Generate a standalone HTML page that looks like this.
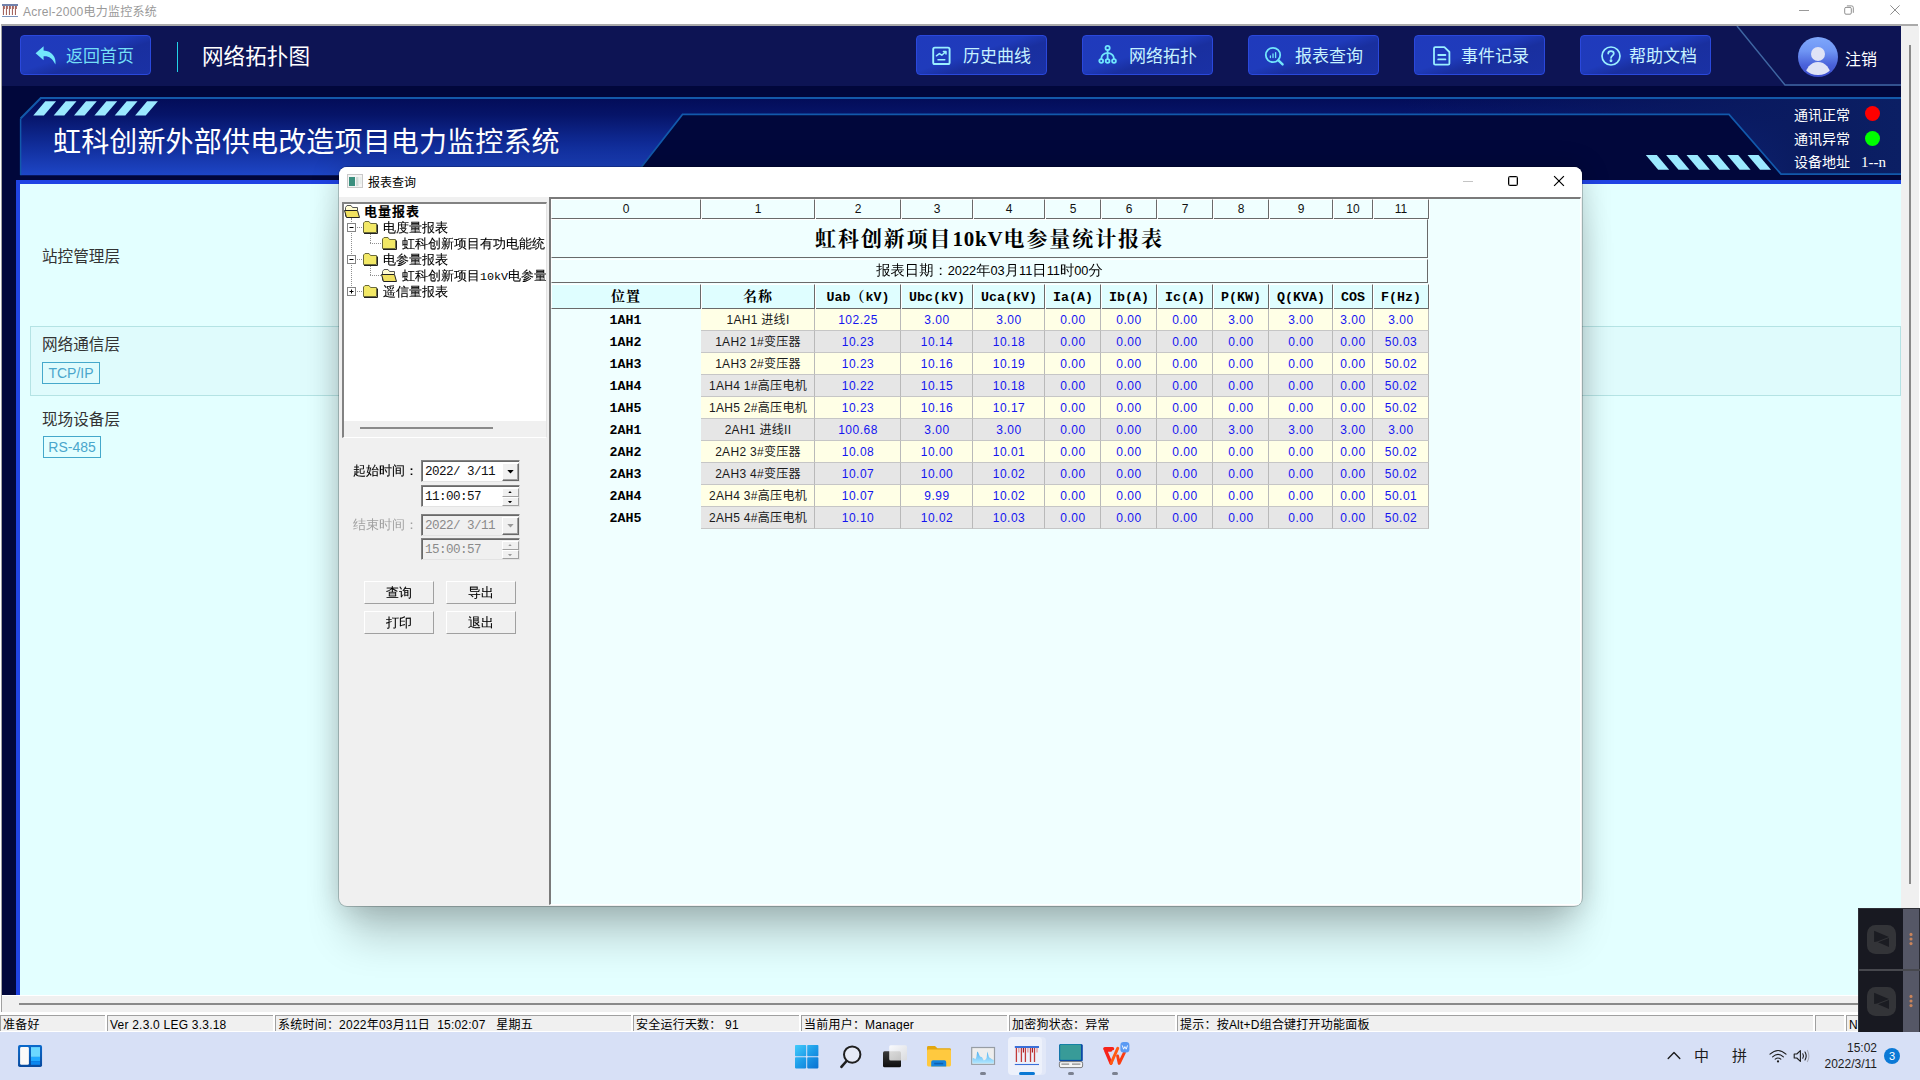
<!DOCTYPE html>
<html lang="zh-CN">
<head>
<meta charset="utf-8">
<title>Acrel-2000电力监控系统</title>
<style>
*{box-sizing:border-box;margin:0;padding:0}
html,body{width:1920px;height:1080px;overflow:hidden;background:#fff}
body{position:relative;font-family:"Liberation Sans","Noto Sans CJK SC",sans-serif;font-size:12px;color:#000}
#root div,#root svg{position:absolute;white-space:nowrap}
.sans{font-family:"Liberation Sans","Noto Sans CJK SC",sans-serif}
.song{font-family:"Liberation Serif","Noto Serif CJK SC",serif}
.zen{font-family:"Liberation Sans","WenQuanYi Zen Hei","Noto Sans CJK SC",sans-serif}

/* ---------- window title bar ---------- */
#titlebar{left:0;top:0;width:1920px;height:24px;background:#fff}
#titlebar .ttl{left:23px;top:3px;font-size:12px;line-height:18px;color:#999;letter-spacing:.25px}
#titleline{left:1px;top:24px;width:1917px;height:2px;background:#aaa}
#leftedge{left:1px;top:26px;width:1px;height:986px;background:#a0a0a0}

/* ---------- app frame ---------- */
#app{left:2px;top:26px;width:1899px;height:969px;background:#01073b;overflow:hidden}
#nav{left:0;top:0;width:1899px;height:60px;background:#0d1454}
.nbtn{top:9px;width:131px;height:40px;border:1px solid #2a48dc;border-radius:4px;
  background:linear-gradient(162deg,#1f3abc 0%,#1f3bbb 44%,#192f9f 60%,#1a31a5 100%)}
  .nbtn .tx{left:46px;top:10px;font-size:17px;line-height:22px;color:#c6f2ff}
.nbtn svg{left:14px;top:10px}
#vsep{left:175px;top:16px;width:1px;height:30px;background:#22d3e6}
#pgname{left:200px;top:16px;font-size:21.6px;line-height:30px;color:#fff}

/* ---------- content panel ---------- */
#panel{left:14px;top:154px;width:1885px;height:815px;background:#e3ffff;border-left:4px solid #2043e3;border-top:4px solid #2043e3}
.lay{font-size:15.6px;line-height:20px;color:#333}
.tag{height:22px;border:1px solid #45a8cb;color:#4aa6cc;font-size:14px;line-height:20px;text-align:center}
#band{left:10px;top:142px;width:1871px;height:70px;background:#dffbfc;border:1px solid #b4e3e4}

/* ---------- scrollbars / status / taskbar ---------- */
#vscroll{left:1901px;top:26px;width:19px;height:970px;background:#f0f0f0}
#hscroll{left:2px;top:995px;width:1918px;height:17px;background:#f0f0f0;border-top:1px solid #fff}
#status{left:0;top:1012px;width:1920px;height:20px;background:#fff}
.pane{top:3px;height:16px;background:#f0f0f0;border-top:1px solid #a0a0a0;border-left:1px solid #a0a0a0;font-size:12px;line-height:18px;padding-left:2px;overflow:hidden;letter-spacing:.22px;color:#000}
#taskbar{left:0;top:1032px;width:1920px;height:48px;background:#d7e0f6}

/* ---------- dialog ---------- */
#dlg{left:339px;top:167px;width:1243px;height:739px;background:#f0f0f0;border-radius:8px;
  box-shadow:0 0 0 1px rgba(0,0,0,.2),0 40px 40px -10px rgba(0,0,0,.2),0 2px 30px 0 rgba(0,0,0,.2);overflow:hidden}
#dlgtitle{left:0;top:0;width:1243px;height:30px;background:#fff}

/* dialog internals */
#dlgtitle .dt{left:29px;top:6px;font-size:12px;line-height:18px;color:#111}
#tree{left:3px;top:35px;width:205px;height:236px;background:#fff;border-left:2px solid #828282;border-top:2px solid #828282;border-right:1px solid #e3e3e3;border-bottom:1px solid #fff;overflow:hidden}
#tree .ti{font-family:"Liberation Mono","WenQuanYi Zen Hei","Noto Sans CJK SC",monospace;font-size:13px;line-height:16px;color:#000;height:16px;-webkit-text-stroke:.12px #000}
#tree .lt{font-size:11.7px;-webkit-text-stroke:0}
.simsun{font-family:"Liberation Mono","WenQuanYi Zen Hei","Noto Sans CJK SC",monospace}
.lbl{font-family:"Liberation Mono","WenQuanYi Zen Hei","Noto Sans CJK SC",monospace;font-size:13px;line-height:16px}
.pick{width:99px;height:22px;background:#fff;border:1px solid;border-color:#828282 #e3e3e3 #e3e3e3 #828282;box-shadow:inset 1px 1px 0 #696969;font-family:"Liberation Mono",monospace;font-size:12.6px;letter-spacing:-.56px;line-height:21px;color:#111}
.pick.dis{background:#f0f0f0;color:#8a8a8a}
.pick .v{left:3px;top:0;height:20px;line-height:22px}
.pick .dd{left:80px;top:2px;width:17px;height:18px;background:#f0f0f0;border:1px solid;border-color:#fff #696969 #696969 #fff;box-shadow:inset -1px -1px 0 #a0a0a0}
.pick .sp{left:80px;width:17px;height:9px;background:#f0f0f0;border:1px solid;border-color:#fff #a0a0a0 #a0a0a0 #fff}
.cbtn{width:70px;height:23px;background:#f0f0f0;border:1px solid;border-color:#fff #a0a0a0 #a0a0a0 #fff;-webkit-text-stroke:.12px #000;text-align:center;font-family:"Liberation Mono","WenQuanYi Zen Hei","Noto Sans CJK SC",monospace;font-size:13px;line-height:23px;color:#000}
#grid{left:210px;top:30px;width:1032px;height:708px;background:#f0ffff;border-left:2px solid #7a7a7a;border-top:2px solid #7a7a7a;border-right:1px solid #fff;border-bottom:1px solid #fff;overflow:hidden}
#grid .hc{top:0;height:20px;background:#f0ffff;border-top:1px solid #fff;border-right:1px solid #6a6a6a;border-bottom:1px solid #6a6a6a;box-shadow:1px 0 0 #fff;text-align:center;font-size:12px;line-height:19px;color:#111}
#grid .mrow{left:0;width:877px;background:#f0ffff;border-top:1px solid #fff;border-left:1px solid #fff;border-right:1px solid #6a6a6a;border-bottom:1px solid #6a6a6a;text-align:center}
#grid .th{top:85px;height:25px;background:#dffeff;border-top:1px solid #fff;border-right:1px solid #6a6a6a;border-bottom:1px solid #6a6a6a;box-shadow:1px 0 0 #fff;text-align:center;font-family:"Liberation Mono","Noto Serif CJK SC",serif;font-weight:bold;font-size:13.3px;line-height:25px;color:#000}
#grid .th .cj{font-size:14px;letter-spacing:1px}
#grid .rh{left:0;width:149px;height:22px;text-align:center;font-family:"Liberation Mono","Noto Serif CJK SC",serif;font-weight:bold;font-size:13.3px;line-height:24px;color:#000}
#grid .c{height:22px;border-right:1px solid #b9b9b9;border-bottom:1px solid #c6c6c6;text-align:center;font-size:12px;line-height:23px;color:#1414f0;letter-spacing:.5px;padding-left:1px}
#grid .c.n{color:#1a1a1a;letter-spacing:.3px}
#grid .dg{font-size:12.8px}
#grid .y{background:#ffffe6}
#grid .g{background:#e6e6e6}
</style>
</head>
<body>
<div id="root">

<!-- window title bar -->
<div id="titlebar">
  <svg width="18" height="16" viewBox="0 0 18 16" style="left:2px;top:3px"><rect x="0" y="1" width="16" height="2" fill="#7283ad"/><rect x="0" y="13" width="16" height="1" fill="#7a93bd"/><g fill="#a4655f"><rect x="0.9" y="3" width="1.1" height="9"/><rect x="3.9" y="3" width="1.1" height="9"/><rect x="6.9" y="3" width="1.1" height="9"/><rect x="9.9" y="3" width="1.1" height="9"/><rect x="12.9" y="3" width="1.1" height="9"/></g><g fill="#b07770"><rect x="2" y="3" width="1" height="3"/><rect x="5" y="3" width="1" height="3"/><rect x="8" y="3" width="1" height="3"/><rect x="11" y="3" width="1" height="3"/><rect x="14" y="3" width="1" height="3"/></g></svg>
  <div class="ttl sans">Acrel-2000电力监控系统</div>
  <div style="left:1799px;top:10px;width:10px;height:1px;background:#9a9a9a"></div>
  <svg width="12" height="12" viewBox="0 0 12 12" style="left:1843px;top:4px" fill="none" stroke="#8f8f8f" stroke-width="1"><rect x="1.7" y="3.4" width="6.6" height="6.8" rx="1.3"/><path d="M3.9 1.9 L8.6 1.9 Q10.3 1.9 10.3 3.6 L10.3 8.8"/></svg>
  <svg width="12" height="12" viewBox="0 0 12 12" style="left:1889px;top:4px"><path d="M1.4 1.4 L10.6 10.6 M10.6 1.4 L1.4 10.6" stroke="#8f8f8f" stroke-width="1" fill="none"/></svg>
</div>
<div id="titleline"></div>
<div id="leftedge"></div>

<!-- application frame -->
<div id="app">
  <div id="nav"></div>
  
  <div class="nbtn" style="left:18px">
    <svg width="24" height="22" viewBox="0 0 24 22" style="left:13px;top:9px"><path d="M9.6 1.2 L1.6 8.2 L9.6 15.2 L9.6 11.2 C14.6 10.8 18.4 12.8 21.4 19.6 C22.6 12.2 17.8 5.8 9.6 5.4 Z" fill="#72e6fb"/></svg>
    <div class="tx" style="left:45px;color:#74dff6">返回首页</div>
  </div>
  <div id="vsep"></div>
  <div id="pgname">网络拓扑图</div>

  <div class="nbtn" style="left:914px">
    <svg width="22" height="22" viewBox="0 0 22 22" style="left:14px;top:9px" fill="none" stroke="#9aefff" stroke-width="1.9" stroke-linecap="round" stroke-linejoin="round"><rect x="2.2" y="2.6" width="16.4" height="16.4" rx="1.6"/><path d="M5.4 10.8 L8.4 8.6 L10.8 10.2 L14.6 6.8 M12.4 6.4 L15 6.4 L15 9 M7 14.8 L13.8 14.8" stroke-width="1.5"/></svg>
    <div class="tx">历史曲线</div>
  </div>
  <div class="nbtn" style="left:1080px">
    <svg width="22" height="22" viewBox="0 0 22 22" style="left:14px;top:8px" fill="none" stroke="#6fe6fd" stroke-width="1.8" stroke-linecap="round"><circle cx="10.6" cy="3.9" r="2.1"/><circle cx="4.2" cy="17" r="1.9"/><circle cx="10.6" cy="17" r="1.9"/><circle cx="17" cy="17" r="1.9"/><path d="M10.6 6 L10.6 15 M4.2 15 C4.2 11 7.2 9.2 10.6 8.8 C14 9.2 17 11 17 15"/></svg>
    <div class="tx">网络拓扑</div>
  </div>
  <div class="nbtn" style="left:1246px">
    <svg width="22" height="22" viewBox="0 0 22 22" style="left:15px;top:10px" fill="none" stroke="#72e6fb" stroke-linecap="round"><circle cx="9" cy="9" r="7.2" stroke-width="1.8"/><path d="M14.4 14.4 L18.6 18.4" stroke-width="2.4"/><path d="M6.4 11.6 L6.4 10 M9 11.6 L9 8 M11.6 11.6 L11.6 6.6" stroke-width="1.3"/></svg>
    <div class="tx">报表查询</div>
  </div>
  <div class="nbtn" style="left:1412px">
    <svg width="22" height="22" viewBox="0 0 22 22" style="left:15px;top:9px" fill="none" stroke="#9aefff" stroke-width="1.8" stroke-linecap="round" stroke-linejoin="round"><path d="M5.2 2.2 L14.4 2.2 L19.4 7 L19.4 18.4 Q19.4 19.6 18.2 19.6 L5.2 19.6 Q4 19.6 4 18.4 L4 3.4 Q4 2.2 5.2 2.2 Z"/><path d="M8.2 10 L15.4 10 M8.2 14.4 L15.4 14.4"/></svg>
    <div class="tx">事件记录</div>
  </div>
  <div class="nbtn" style="left:1578px">
    <svg width="22" height="22" viewBox="0 0 22 22" style="left:19px;top:9px" fill="none" stroke="#9aefff" stroke-width="1.7" stroke-linecap="round"><circle cx="11" cy="11" r="9"/><path d="M8.2 8.6 C8.2 5.4 13.8 5.4 13.8 8.6 C13.8 10.6 11 10.8 11 13"/><circle cx="11" cy="15.8" r="0.6" fill="#9aefff"/></svg>
    <div class="tx" style="left:48px">帮助文档</div>
  </div>

  <!-- user corner -->
  <svg width="170" height="64" viewBox="0 0 170 64" style="left:1731px;top:0" fill="none" stroke="#3f66a2" stroke-width="1.5"><path d="M4 0 L52 59 L170 59"/></svg>
  <div id="avatar" style="left:1796px;top:11px;width:40px;height:40px;border-radius:50%;background:linear-gradient(180deg,#7ea7fb 0%,#6f95f4 35%,#4a62da 70%,#3b4dcd 100%);overflow:hidden">
    <div style="left:13px;top:10px;width:14px;height:14px;border-radius:50%;background:#dfe3f6"></div>
    <div style="left:2.3px;top:2.3px;width:35.4px;height:35.4px;border-radius:50%;overflow:hidden"><div style="left:4.4px;top:23px;width:26.6px;height:30px;border-radius:50%;background:#dfe3f6"></div></div>
  </div>
  <div style="left:1843px;top:23px;font-size:16px;line-height:22px;color:#fff">注销</div>

  
  <svg id="banner" width="1899" height="84" viewBox="0 0 1899 84" style="left:0;top:70px">
    <defs>
      <linearGradient id="bg1" x1="0" y1="0" x2="0" y2="1">
        <stop offset="0" stop-color="#030c58"/><stop offset="0.22" stop-color="#061468"/>
        <stop offset="0.6" stop-color="#102c98"/><stop offset="1" stop-color="#1e46c6"/>
      </linearGradient>
      <linearGradient id="bg2" x1="0" y1="0" x2="1" y2="0">
        <stop offset="0" stop-color="#0a1b60" stop-opacity="0"/><stop offset="0.8" stop-color="#0a1b60" stop-opacity="1"/>
        <stop offset="1" stop-color="#0b1f64"/>
      </linearGradient>
    </defs>
    <path d="M18.6 22.5 L38.8 1.8 L1899 1.8 L1899 78.6 L1779 78.6 L1727 18.4 L680.5 18.4 L633 79.2 L18.6 79.2 Z" fill="url(#bg1)"/>
    <path d="M1400 1.8 L1899 1.8 L1899 78.6 L1779 78.6 L1727 18.4 L1400 18.4 Z" fill="url(#bg2)"/>
    <path d="M18.6 79.2 L18.6 22.5" fill="none" stroke="#1259ab" stroke-width="1.5"/><path d="M18.6 22.5 L38.8 2 L1899 2" fill="none" stroke="#1359a9" stroke-width="2.1"/>
    <path d="M633 79.2 L680.5 18.4 L1727 18.4 L1779 78.1 L1899 78.1" fill="none" stroke="#1259ab" stroke-width="1.7"/>
    <g fill="#9be9ff"><polygon points="31.3,19.5 41.9,19.5 54.1,5.2 43.3,5.2"/><polygon points="51.7,19.5 62.3,19.5 74.5,5.2 63.7,5.2"/><polygon points="72.0,19.5 82.6,19.5 94.8,5.2 84.0,5.2"/><polygon points="92.4,19.5 103.0,19.5 115.2,5.2 104.4,5.2"/><polygon points="112.7,19.5 123.3,19.5 135.5,5.2 124.7,5.2"/><polygon points="133.1,19.5 143.7,19.5 155.9,5.2 145.1,5.2"/><polygon points="1643.8,59 1654.8,59 1667.2,73.7 1656.2,73.7"/><polygon points="1664.1,59 1675.1,59 1687.5,73.7 1676.5,73.7"/><polygon points="1684.5,59 1695.5,59 1707.9,73.7 1696.9,73.7"/><polygon points="1704.8,59 1715.8,59 1728.2,73.7 1717.2,73.7"/><polygon points="1725.2,59 1736.2,59 1748.6,73.7 1737.6,73.7"/><polygon points="1745.5,59 1756.5,59 1769.0,73.7 1758.0,73.7"/></g>
  </svg>
  <div id="sysname" style="left:51px;top:97px;letter-spacing:.15px;font-size:28px;line-height:40px;color:#fff">虹科创新外部供电改造项目电力监控系统</div>
  <div class="st" style="left:1792px;top:79px;font-size:14px;line-height:20px;color:#fff">通讯正常</div>
  <div class="st" style="left:1792px;top:103px;font-size:14px;line-height:20px;color:#fff">通讯异常</div>
  <div class="st" style="left:1792px;top:126px;font-size:14px;line-height:20px;color:#fff">设备地址</div>
  <div class="st song" style="left:1859px;top:126px;font-size:15px;line-height:20px;color:#fff">1--n</div>
  <div style="left:1863px;top:80px;width:15px;height:15px;border-radius:50%;background:#ff0000"></div>
  <div style="left:1863px;top:105px;width:15px;height:15px;border-radius:50%;background:#00ff00"></div>

  <div id="panel">
    
    <div id="band"></div>
    <div class="lay" style="left:22px;top:63px">站控管理层</div>
    <div class="lay" style="left:22px;top:151px">网络通信层</div>
    <div class="tag" style="left:22px;top:178px;width:58px">TCP/IP</div>
    <div class="lay" style="left:22px;top:226px">现场设备层</div>
    <div class="tag" style="left:23px;top:252px;width:58px">RS-485</div>

  </div>
</div>

<div id="vscroll"><div style="left:18px;top:0;width:1px;height:970px;background:#fff"></div><div style="left:8px;top:19px;width:2px;height:839px;background:#8a8a8a"></div></div>
<div id="hscroll"><div style="left:17px;top:7px;width:1840px;height:2px;background:#8a8a8a"></div></div>
<div id="status">
  <div class="pane" style="left:0px;width:105px">准备好</div><div class="pane" style="left:107px;width:166px">Ver 2.3.0 LEG 3.3.18</div><div class="pane" style="left:275px;width:356px">系统时间：2022年03月11日&nbsp; 15:02:07&nbsp;&nbsp; 星期五</div><div class="pane" style="left:633px;width:166px">安全运行天数：&nbsp;91</div><div class="pane" style="left:801px;width:206px">当前用户：Manager</div><div class="pane" style="left:1009px;width:166px">加密狗状态：异常</div><div class="pane" style="left:1177px;width:636px">提示：按Alt+D组合键打开功能面板</div><div class="pane" style="left:1815px;width:29px"></div><div class="pane" style="left:1846px;width:74px">N</div>
</div>
<div id="taskbar">
  
  <!-- widgets -->
  <svg width="26" height="24" viewBox="0 0 26 24" style="left:17px;top:12px"><defs><linearGradient id="wd" x1="0" y1="0" x2="0" y2="1"><stop offset="0" stop-color="#0b6acb"/><stop offset="1" stop-color="#084a9e"/></linearGradient></defs><rect x="1.05" y="1" width="24" height="22" rx="1.8" fill="url(#wd)"/><rect x="3.1" y="3.1" width="8.8" height="17.7" rx="1.3" fill="#fbfaf8"/><rect x="14" y="3.1" width="9" height="9.8" fill="#6bd8ff"/><rect x="14" y="12.9" width="9" height="4.3" fill="#1fa9ff"/><rect x="14" y="17.2" width="9" height="3.6" fill="#0a86ee"/></svg>
  <!-- start -->
  <svg width="24" height="24" viewBox="0 0 24 24" style="left:795px;top:13px"><defs><linearGradient id="wg" gradientUnits="userSpaceOnUse" x1="0" y1="0" x2="24" y2="24"><stop offset="0" stop-color="#42cbfc"/><stop offset="0.5" stop-color="#1c9be8"/><stop offset="1" stop-color="#0a6fd0"/></linearGradient></defs><g fill="url(#wg)"><rect x="0" y="0" width="11.2" height="11.2" rx="0.8"/><rect x="12.2" y="0" width="11.2" height="11.2" rx="0.8"/><rect x="0" y="12.2" width="11.2" height="11.2" rx="0.8"/><rect x="12.2" y="12.2" width="11.2" height="11.2" rx="0.8"/></g></svg>
  <!-- search -->
  <svg width="24" height="24" viewBox="0 0 24 24" style="left:839px;top:13px" fill="none" stroke="#1f1f1f" stroke-linecap="round"><circle cx="13.2" cy="9.6" r="8.2" stroke-width="2" fill="#e6eaf6"/><path d="M7.6 16 L2.4 21.8" stroke-width="2.6"/></svg>
  <!-- task view -->
  <svg width="26" height="24" viewBox="0 0 26 24" style="left:882px;top:13px"><defs><linearGradient id="tv1" x1="0" y1="0" x2="0" y2="1"><stop offset="0" stop-color="#3a3a3a"/><stop offset="1" stop-color="#0e0e0e"/></linearGradient><linearGradient id="tv2" x1="0" y1="0" x2="1" y2="1"><stop offset="0" stop-color="#ffffff"/><stop offset="1" stop-color="#dadada"/></linearGradient></defs><rect x="1" y="6.2" width="18" height="16" rx="1.5" fill="url(#tv1)"/><rect x="7.2" y="0.2" width="17.8" height="15.4" rx="1.5" fill="url(#tv2)" fill-opacity="0.85"/></svg>
  <!-- explorer -->
  <svg width="26" height="24" viewBox="0 0 26 24" style="left:926px;top:13px"><path d="M1 2.4 Q1 1 2.4 1 L9 1 L11.4 3.2 L23.6 3.2 Q25 3.2 25 4.6 L25 6 L1 6 Z" fill="#e3a70f"/><rect x="1" y="4.4" width="24" height="17" rx="1.4" fill="#ffc93f"/><path d="M5.2 21.4 L5.2 17 Q5.2 15.2 7 15.2 L18.4 15.2 Q20.2 15.2 20.2 17 L20.2 21.4 Z" fill="#1584dd"/><rect x="8.2" y="17.8" width="9" height="1.6" fill="#0c5fb0"/></svg>
  <!-- perf monitor -->
  <svg width="26" height="20" viewBox="0 0 26 20" style="left:970px;top:14px"><defs><linearGradient id="pm" x1="0" y1="0" x2="0" y2="1"><stop offset="0" stop-color="#4cb0f2"/><stop offset="1" stop-color="#b4e8ff"/></linearGradient></defs><rect x="1.7" y="1.5" width="22.8" height="16.8" fill="#eeeeee" stroke="#979da4" stroke-width="1.2"/><path d="M2.4 12.6 L3.6 12 L5.4 13.2 L6.4 11 L7.2 5.4 L8.2 6.4 L9 8.6 L10 10.4 L12 11.2 L13 13 L13.8 14.6 L15.4 13.8 L16.6 12 L17.4 5.6 L18.2 8.4 L19 11.2 L20.6 12.2 L22.4 13.6 L23.8 14 L23.8 17.6 L2.4 17.6 Z" fill="url(#pm)"/></svg>
  <div style="left:980px;top:40px;width:6px;height:3px;border-radius:2px;background:#7b8190"></div>
  <!-- active app -->
  <div style="left:1011px;top:5px;width:35px;height:38px;border-radius:4px;background:#e2e8f8"></div>
  <div style="left:1008px;top:5px;width:34px;height:38px;border-radius:4px;background:#edf1fb"></div>
  <svg width="28" height="22" viewBox="0 0 28 22" style="left:1013px;top:13px"><path d="M1.8 2 L26 2" stroke="#3a6fd8" stroke-width="2"/><path d="M1.8 19.5 L26 19.5" stroke="#3a6fd8" stroke-width="1.1"/><g stroke="#c23a3a" stroke-width="1.3"><path d="M3.4 3 V17"/><path d="M8.4 3 V17"/><path d="M12.4 3 V17"/><path d="M17.5 3 V17"/><path d="M21.5 3 V17"/></g><g stroke="#a80f12" stroke-width="1.1"><path d="M10.4 3 V7.6"/><path d="M19.4 3 V7.6"/></g><g stroke="#e5a4a6" stroke-width="1.5"><path d="M5.8 3 V7.6"/><path d="M14.9 3 V7.6"/><path d="M24 3 V7.6"/></g></svg>
  <div style="left:1019px;top:40px;width:16px;height:3px;border-radius:2px;background:#0b78d4"></div>
  <!-- monitor -->
  <svg width="26" height="26" viewBox="0 0 26 26" style="left:1058px;top:11px"><rect x="1.2" y="1" width="23.6" height="17.6" rx="1.6" fill="#0b4aa6"/><path d="M1.2 2.6 Q1.2 1 2.8 1 L23 1 L23 17 L1.2 17 Z" fill="#0a7aa8"/><rect x="2.2" y="1.8" width="20.8" height="15" rx="0.8" fill="#389b98"/><rect x="1.4" y="18.6" width="23.2" height="6" rx="1.6" fill="#f4f4f4" stroke="#707070" stroke-width="0.9"/><path d="M3.4 21.2 L11.2 21.2 M14 21.2 L22.4 21.2" stroke="#8a8a8a" stroke-width="1.2"/></svg>
  <div style="left:1068px;top:40px;width:6px;height:3px;border-radius:2px;background:#7b8190"></div>
  <!-- wps -->
  <svg width="30" height="28" viewBox="0 0 30 28" style="left:1102px;top:9px" fill="none" stroke-linecap="round" stroke-linejoin="round"><path d="M2.8 7.7 L10.6 7.7 M2.8 7.7 L9 22.2 M4.6 9 L8.8 9" stroke="#f6231a" stroke-width="3.3"/><path d="M9 22.4 L15.8 7.2" stroke="#ff5a12" stroke-width="2.9"/><path d="M15.6 15 L17.2 22.4 L22.4 11.6" stroke="#fa3d12" stroke-width="2.9"/><rect x="18.4" y="1" width="9" height="10.4" rx="3.2" fill="#5a9af4" stroke="none"/><path d="M20.4 4.8 L21.6 8.2 L22.9 5.6 L24.2 8.2 L25.4 4.8" stroke="#fff" stroke-width="0.9"/></svg>
  <div style="left:1112px;top:40px;width:6px;height:3px;border-radius:2px;background:#7b8190"></div>
  <!-- tray -->
  <svg width="14" height="9" viewBox="0 0 14 9" style="left:1667px;top:19px"><path d="M1.2 7.4 L7 1.6 L12.8 7.4" stroke="#1c1c1c" stroke-width="1.4" fill="none" stroke-linecap="round" stroke-linejoin="round"/></svg>
  <div style="left:1694px;top:14px;font-size:15px;line-height:20px;color:#1c1c1c">中</div>
  <div style="left:1732px;top:14px;font-size:15px;line-height:20px;color:#1c1c1c">拼</div>
  <svg width="18" height="14" viewBox="0 0 18 14" style="left:1769px;top:17px" fill="none" stroke="#1c1c1c" stroke-width="1.1" stroke-linecap="round"><path d="M1 5.2 Q9 -2.2 17 5.2"/><path d="M3.6 7.8 Q9 3 14.4 7.8"/><path d="M6.2 10.2 Q9 7.8 11.8 10.2"/><circle cx="9" cy="12.4" r="1.1" fill="#1c1c1c" stroke="none"/></svg>
  <svg width="18" height="14" viewBox="0 0 18 14" style="left:1793px;top:17px" fill="none" stroke="#1c1c1c" stroke-width="1.1" stroke-linecap="round" stroke-linejoin="round"><path d="M1.2 5 L3.8 5 L7.4 1.6 L7.4 12.4 L3.8 9 L1.2 9 Z"/><path d="M9.8 4.8 Q11.2 7 9.8 9.2"/><path d="M12 3 Q14.4 7 12 11"/><path d="M14.4 1.4 Q17.4 7 14.4 12.6" stroke="#a8acb8"/></svg>
  <div style="left:1800px;top:8px;width:77px;text-align:right;font-size:12px;line-height:16px;color:#1c1c1c">15:02</div>
  <div style="left:1800px;top:24px;width:77px;text-align:right;font-size:12px;line-height:16px;color:#1c1c1c">2022/3/11</div>
  <div style="left:1884px;top:16px;width:16px;height:16px;border-radius:50%;background:#0b79d6;color:#fff;font-size:11px;line-height:16px;text-align:center">3</div>

</div>

<!-- report query dialog -->
<div id="dlg">
  <div id="dlgtitle"></div>
  
  <svg width="16" height="14" viewBox="0 0 16 14" style="left:8px;top:7px"><rect x="0.5" y="0.5" width="15" height="13" fill="#f4f4f4" stroke="#c9c9c9"/><rect x="2" y="3" width="6" height="9" fill="#3a8f7e"/><rect x="9" y="3" width="2.5" height="9" fill="#d0dcd8"/><rect x="12.5" y="3" width="2" height="7" fill="#e6ece9"/></svg>
  <div class="dt" style="left:29px;top:7px;font-size:12px;line-height:18px;color:#000">报表查询</div>
  <div style="left:1124px;top:14px;width:10px;height:1px;background:#c4c4c4"></div>
  <div style="left:1169px;top:9px;width:10px;height:10px;border:1px solid #000;border-radius:1.5px;box-shadow:inset 0 0 0 .3px #000"></div>
  <svg width="12" height="12" viewBox="0 0 12 12" style="left:1214px;top:8px"><path d="M1.1 1.1 L10.9 10.9 M10.9 1.1 L1.1 10.9" stroke="#000" stroke-width="1.2" fill="none"/></svg>
  <div id="tree">
      <svg width="17" height="15" viewBox="0 0 17 15" style="left:0px;top:0px"><path d="M1.5 12.5 L1.5 3.5 L3 1.5 L7 1.5 L8.5 3.5 L13.5 3.5 L13.5 6" fill="#fffbd0" stroke="#555" stroke-width="1"/><path d="M0.5 6.5 L13.5 6.5 L15.5 13.5 L2.5 13.5 Z" fill="#f0e060" stroke="#222" stroke-width="1"/></svg>
      <div class="ti" style="left:20px;top:1px;font-weight:bold;font-family:'Liberation Mono','Noto Sans CJK SC',monospace;letter-spacing:1px">电量报表</div>
      <div style="left:7px;top:14px;width:0;height:70px;border-left:1px dotted #909090"></div>
      <div style="left:11px;top:23px;width:7px;height:0;border-top:1px dotted #909090"></div>
      <div style="left:11px;top:55px;width:7px;height:0;border-top:1px dotted #909090"></div>
      <div style="left:11px;top:87px;width:7px;height:0;border-top:1px dotted #909090"></div>
      <div style="left:26px;top:30px;width:0;height:9px;border-left:1px dotted #909090"></div>
      <div style="left:26px;top:39px;width:11px;height:0;border-top:1px dotted #909090"></div>
      <div style="left:26px;top:62px;width:0;height:9px;border-left:1px dotted #909090"></div>
      <div style="left:26px;top:71px;width:11px;height:0;border-top:1px dotted #909090"></div>
      <svg width="9" height="9" viewBox="0 0 9 9" style="left:3px;top:19px"><rect x="0.5" y="0.5" width="8" height="8" fill="#fff" stroke="#848484"/><path d="M2.5 4.5 L6.5 4.5" stroke="#000"/></svg>
      <svg width="17" height="15" viewBox="0 0 17 15" style="left:18px;top:16px"><path d="M1.5 12.5 L1.5 3 L3 1.5 L7 1.5 L8.5 3.5 L14.5 3.5 L14.5 12.5 Z" fill="#f2e866" stroke="#6b6b3a" stroke-width="1"/><path d="M2 13.5 L15.5 13.5 L15.5 4.5" fill="none" stroke="#222" stroke-width="1"/></svg>
      <div class="ti" style="left:39px;top:17px">电度量报表</div>
      <svg width="17" height="15" viewBox="0 0 17 15" style="left:37px;top:32px"><path d="M1.5 12.5 L1.5 3 L3 1.5 L7 1.5 L8.5 3.5 L14.5 3.5 L14.5 12.5 Z" fill="#f2e866" stroke="#6b6b3a" stroke-width="1"/><path d="M2 13.5 L15.5 13.5 L15.5 4.5" fill="none" stroke="#222" stroke-width="1"/></svg>
      <div class="ti" style="left:58px;top:33px">虹科创新项目有功电能统</div>
      <svg width="9" height="9" viewBox="0 0 9 9" style="left:3px;top:51px"><rect x="0.5" y="0.5" width="8" height="8" fill="#fff" stroke="#848484"/><path d="M2.5 4.5 L6.5 4.5" stroke="#000"/></svg>
      <svg width="17" height="15" viewBox="0 0 17 15" style="left:18px;top:48px"><path d="M1.5 12.5 L1.5 3 L3 1.5 L7 1.5 L8.5 3.5 L14.5 3.5 L14.5 12.5 Z" fill="#f2e866" stroke="#6b6b3a" stroke-width="1"/><path d="M2 13.5 L15.5 13.5 L15.5 4.5" fill="none" stroke="#222" stroke-width="1"/></svg>
      <div class="ti" style="left:39px;top:49px">电参量报表</div>
      <svg width="17" height="15" viewBox="0 0 17 15" style="left:37px;top:64px"><path d="M1.5 12.5 L1.5 3.5 L3 1.5 L7 1.5 L8.5 3.5 L13.5 3.5 L13.5 6" fill="#fffbd0" stroke="#555" stroke-width="1"/><path d="M0.5 6.5 L13.5 6.5 L15.5 13.5 L2.5 13.5 Z" fill="#f0e060" stroke="#222" stroke-width="1"/></svg>
      <div class="ti" style="left:58px;top:65px">虹科创新项目<span class="lt">10kV</span>电参量</div>
      <svg width="9" height="9" viewBox="0 0 9 9" style="left:3px;top:83px"><rect x="0.5" y="0.5" width="8" height="8" fill="#fff" stroke="#848484"/><path d="M2.5 4.5 L6.5 4.5" stroke="#000"/><path d="M4.5 2.5 L4.5 6.5" stroke="#000"/></svg>
      <svg width="17" height="15" viewBox="0 0 17 15" style="left:18px;top:80px"><path d="M1.5 12.5 L1.5 3 L3 1.5 L7 1.5 L8.5 3.5 L14.5 3.5 L14.5 12.5 Z" fill="#f2e866" stroke="#6b6b3a" stroke-width="1"/><path d="M2 13.5 L15.5 13.5 L15.5 4.5" fill="none" stroke="#222" stroke-width="1"/></svg>
      <div class="ti" style="left:39px;top:81px">遥信量报表</div>
      <div style="left:0;top:217px;width:204px;height:16px;background:#f0f0f0"></div>
      <div style="left:16px;top:223px;width:133px;height:2px;background:#8a8a8a"></div>
  </div>
  <div style="left:210px;top:30px;width:1px;height:709px;background:#f0f0f0"></div>
  <div class="lbl" style="left:14px;top:297px;-webkit-text-stroke:.12px #000">起始时间：</div>
  <div class="pick" style="left:82px;top:293px"><div class="v">2022/ 3/11</div><div class="dd"><svg width="7" height="4" viewBox="0 0 8 5" style="left:4px;top:6px"><path d="M0 0 L8 0 L4 4.5 Z" fill="#000"/></svg></div></div>
  <div class="pick" style="left:82px;top:318px"><div class="v">11:00:57</div><div class="sp" style="top:2px"><svg width="4" height="2.4" viewBox="0 0 5 3" style="left:5px;top:2px"><path d="M0 3 L5 3 L2.5 0 Z" fill="#000"/></svg></div><div class="sp" style="top:11px"><svg width="4" height="2.4" viewBox="0 0 5 3" style="left:5px;top:3px"><path d="M0 0 L5 0 L2.5 3 Z" fill="#000"/></svg></div></div>
  <div class="lbl" style="left:14px;top:351px;color:#a0a0a0">结束时间：</div>
  <div class="pick dis" style="left:82px;top:347px"><div class="v">2022/ 3/11</div><div class="dd"><svg width="7" height="4" viewBox="0 0 8 5" style="left:4px;top:6px"><path d="M0 0 L8 0 L4 4.5 Z" fill="#9a9a9a"/></svg></div></div>
  <div class="pick dis" style="left:82px;top:371px"><div class="v">15:00:57</div><div class="sp" style="top:2px"><svg width="4" height="2.4" viewBox="0 0 5 3" style="left:5px;top:2px"><path d="M0 3 L5 3 L2.5 0 Z" fill="#9a9a9a"/></svg></div><div class="sp" style="top:11px"><svg width="4" height="2.4" viewBox="0 0 5 3" style="left:5px;top:3px"><path d="M0 0 L5 0 L2.5 3 Z" fill="#9a9a9a"/></svg></div></div>
  <div class="cbtn" style="left:25px;top:414px">查询</div>
  <div class="cbtn" style="left:107px;top:414px">导出</div>
  <div class="cbtn" style="left:25px;top:444px">打印</div>
  <div class="cbtn" style="left:107px;top:444px">退出</div>
  <div id="grid">
    <div class="hc" style="left:0px;width:150px;border-left:1px solid #fff">0</div>
    <div class="hc" style="left:151px;width:113px">1</div>
    <div class="hc" style="left:265px;width:85px">2</div>
    <div class="hc" style="left:351px;width:71px">3</div>
    <div class="hc" style="left:423px;width:71px">4</div>
    <div class="hc" style="left:495px;width:55px">5</div>
    <div class="hc" style="left:551px;width:55px">6</div>
    <div class="hc" style="left:607px;width:55px">7</div>
    <div class="hc" style="left:663px;width:55px">8</div>
    <div class="hc" style="left:719px;width:63px">9</div>
    <div class="hc" style="left:783px;width:39px">10</div>
    <div class="hc" style="left:823px;width:55px">11</div>
    <div class="mrow song" style="top:20px;height:39px;font-weight:bold;font-size:21px;line-height:38px;letter-spacing:1.9px;color:#000">虹科创新项目<span style="letter-spacing:0.8px">10kV</span>电参量统计报表</div>
    <div class="mrow" style="top:60px;height:24px;font-family:'Liberation Sans','WenQuanYi Zen Hei','Noto Sans CJK SC',sans-serif;font-size:14.3px;line-height:21px;color:#000"><span>报表日期：</span><span class="dg">2022</span>年<span class="dg">03</span>月<span class="dg">11</span>日<span class="dg">11</span>时<span class="dg">00</span>分</div>
    <div class="th" style="left:0px;width:150px;border-left:1px solid #fff"><span class="cj">位置</span></div>
    <div class="th" style="left:151px;width:113px"><span class="cj">名称</span></div>
    <div class="th" style="left:265px;width:85px">Uab<span class="cj">（</span>kV)</div>
    <div class="th" style="left:351px;width:71px">Ubc(kV)</div>
    <div class="th" style="left:423px;width:71px">Uca(kV)</div>
    <div class="th" style="left:495px;width:55px">Ia(A)</div>
    <div class="th" style="left:551px;width:55px">Ib(A)</div>
    <div class="th" style="left:607px;width:55px">Ic(A)</div>
    <div class="th" style="left:663px;width:55px">P(KW)</div>
    <div class="th" style="left:719px;width:63px">Q(KVA)</div>
    <div class="th" style="left:783px;width:39px">COS</div>
    <div class="th" style="left:823px;width:55px">F(Hz)</div>
    <div class="rh" style="top:110px">1AH1</div>
    <div class="c n y" style="left:150px;top:110px;width:114px">1AH1 进线I</div>
    <div class="c y" style="left:264px;top:110px;width:86px">102.25</div>
    <div class="c y" style="left:350px;top:110px;width:72px">3.00</div>
    <div class="c y" style="left:422px;top:110px;width:72px">3.00</div>
    <div class="c y" style="left:494px;top:110px;width:56px">0.00</div>
    <div class="c y" style="left:550px;top:110px;width:56px">0.00</div>
    <div class="c y" style="left:606px;top:110px;width:56px">0.00</div>
    <div class="c y" style="left:662px;top:110px;width:56px">3.00</div>
    <div class="c y" style="left:718px;top:110px;width:64px">3.00</div>
    <div class="c y" style="left:782px;top:110px;width:40px">3.00</div>
    <div class="c y" style="left:822px;top:110px;width:56px">3.00</div>
    <div class="rh" style="top:132px">1AH2</div>
    <div class="c n g" style="left:150px;top:132px;width:114px">1AH2 1#变压器</div>
    <div class="c g" style="left:264px;top:132px;width:86px">10.23</div>
    <div class="c g" style="left:350px;top:132px;width:72px">10.14</div>
    <div class="c g" style="left:422px;top:132px;width:72px">10.18</div>
    <div class="c g" style="left:494px;top:132px;width:56px">0.00</div>
    <div class="c g" style="left:550px;top:132px;width:56px">0.00</div>
    <div class="c g" style="left:606px;top:132px;width:56px">0.00</div>
    <div class="c g" style="left:662px;top:132px;width:56px">0.00</div>
    <div class="c g" style="left:718px;top:132px;width:64px">0.00</div>
    <div class="c g" style="left:782px;top:132px;width:40px">0.00</div>
    <div class="c g" style="left:822px;top:132px;width:56px">50.03</div>
    <div class="rh" style="top:154px">1AH3</div>
    <div class="c n y" style="left:150px;top:154px;width:114px">1AH3 2#变压器</div>
    <div class="c y" style="left:264px;top:154px;width:86px">10.23</div>
    <div class="c y" style="left:350px;top:154px;width:72px">10.16</div>
    <div class="c y" style="left:422px;top:154px;width:72px">10.19</div>
    <div class="c y" style="left:494px;top:154px;width:56px">0.00</div>
    <div class="c y" style="left:550px;top:154px;width:56px">0.00</div>
    <div class="c y" style="left:606px;top:154px;width:56px">0.00</div>
    <div class="c y" style="left:662px;top:154px;width:56px">0.00</div>
    <div class="c y" style="left:718px;top:154px;width:64px">0.00</div>
    <div class="c y" style="left:782px;top:154px;width:40px">0.00</div>
    <div class="c y" style="left:822px;top:154px;width:56px">50.02</div>
    <div class="rh" style="top:176px">1AH4</div>
    <div class="c n g" style="left:150px;top:176px;width:114px">1AH4 1#高压电机</div>
    <div class="c g" style="left:264px;top:176px;width:86px">10.22</div>
    <div class="c g" style="left:350px;top:176px;width:72px">10.15</div>
    <div class="c g" style="left:422px;top:176px;width:72px">10.18</div>
    <div class="c g" style="left:494px;top:176px;width:56px">0.00</div>
    <div class="c g" style="left:550px;top:176px;width:56px">0.00</div>
    <div class="c g" style="left:606px;top:176px;width:56px">0.00</div>
    <div class="c g" style="left:662px;top:176px;width:56px">0.00</div>
    <div class="c g" style="left:718px;top:176px;width:64px">0.00</div>
    <div class="c g" style="left:782px;top:176px;width:40px">0.00</div>
    <div class="c g" style="left:822px;top:176px;width:56px">50.02</div>
    <div class="rh" style="top:198px">1AH5</div>
    <div class="c n y" style="left:150px;top:198px;width:114px">1AH5 2#高压电机</div>
    <div class="c y" style="left:264px;top:198px;width:86px">10.23</div>
    <div class="c y" style="left:350px;top:198px;width:72px">10.16</div>
    <div class="c y" style="left:422px;top:198px;width:72px">10.17</div>
    <div class="c y" style="left:494px;top:198px;width:56px">0.00</div>
    <div class="c y" style="left:550px;top:198px;width:56px">0.00</div>
    <div class="c y" style="left:606px;top:198px;width:56px">0.00</div>
    <div class="c y" style="left:662px;top:198px;width:56px">0.00</div>
    <div class="c y" style="left:718px;top:198px;width:64px">0.00</div>
    <div class="c y" style="left:782px;top:198px;width:40px">0.00</div>
    <div class="c y" style="left:822px;top:198px;width:56px">50.02</div>
    <div class="rh" style="top:220px">2AH1</div>
    <div class="c n g" style="left:150px;top:220px;width:114px">2AH1 进线II</div>
    <div class="c g" style="left:264px;top:220px;width:86px">100.68</div>
    <div class="c g" style="left:350px;top:220px;width:72px">3.00</div>
    <div class="c g" style="left:422px;top:220px;width:72px">3.00</div>
    <div class="c g" style="left:494px;top:220px;width:56px">0.00</div>
    <div class="c g" style="left:550px;top:220px;width:56px">0.00</div>
    <div class="c g" style="left:606px;top:220px;width:56px">0.00</div>
    <div class="c g" style="left:662px;top:220px;width:56px">3.00</div>
    <div class="c g" style="left:718px;top:220px;width:64px">3.00</div>
    <div class="c g" style="left:782px;top:220px;width:40px">3.00</div>
    <div class="c g" style="left:822px;top:220px;width:56px">3.00</div>
    <div class="rh" style="top:242px">2AH2</div>
    <div class="c n y" style="left:150px;top:242px;width:114px">2AH2 3#变压器</div>
    <div class="c y" style="left:264px;top:242px;width:86px">10.08</div>
    <div class="c y" style="left:350px;top:242px;width:72px">10.00</div>
    <div class="c y" style="left:422px;top:242px;width:72px">10.01</div>
    <div class="c y" style="left:494px;top:242px;width:56px">0.00</div>
    <div class="c y" style="left:550px;top:242px;width:56px">0.00</div>
    <div class="c y" style="left:606px;top:242px;width:56px">0.00</div>
    <div class="c y" style="left:662px;top:242px;width:56px">0.00</div>
    <div class="c y" style="left:718px;top:242px;width:64px">0.00</div>
    <div class="c y" style="left:782px;top:242px;width:40px">0.00</div>
    <div class="c y" style="left:822px;top:242px;width:56px">50.02</div>
    <div class="rh" style="top:264px">2AH3</div>
    <div class="c n g" style="left:150px;top:264px;width:114px">2AH3 4#变压器</div>
    <div class="c g" style="left:264px;top:264px;width:86px">10.07</div>
    <div class="c g" style="left:350px;top:264px;width:72px">10.00</div>
    <div class="c g" style="left:422px;top:264px;width:72px">10.02</div>
    <div class="c g" style="left:494px;top:264px;width:56px">0.00</div>
    <div class="c g" style="left:550px;top:264px;width:56px">0.00</div>
    <div class="c g" style="left:606px;top:264px;width:56px">0.00</div>
    <div class="c g" style="left:662px;top:264px;width:56px">0.00</div>
    <div class="c g" style="left:718px;top:264px;width:64px">0.00</div>
    <div class="c g" style="left:782px;top:264px;width:40px">0.00</div>
    <div class="c g" style="left:822px;top:264px;width:56px">50.02</div>
    <div class="rh" style="top:286px">2AH4</div>
    <div class="c n y" style="left:150px;top:286px;width:114px">2AH4 3#高压电机</div>
    <div class="c y" style="left:264px;top:286px;width:86px">10.07</div>
    <div class="c y" style="left:350px;top:286px;width:72px">9.99</div>
    <div class="c y" style="left:422px;top:286px;width:72px">10.02</div>
    <div class="c y" style="left:494px;top:286px;width:56px">0.00</div>
    <div class="c y" style="left:550px;top:286px;width:56px">0.00</div>
    <div class="c y" style="left:606px;top:286px;width:56px">0.00</div>
    <div class="c y" style="left:662px;top:286px;width:56px">0.00</div>
    <div class="c y" style="left:718px;top:286px;width:64px">0.00</div>
    <div class="c y" style="left:782px;top:286px;width:40px">0.00</div>
    <div class="c y" style="left:822px;top:286px;width:56px">50.01</div>
    <div class="rh" style="top:308px">2AH5</div>
    <div class="c n g" style="left:150px;top:308px;width:114px">2AH5 4#高压电机</div>
    <div class="c g" style="left:264px;top:308px;width:86px">10.10</div>
    <div class="c g" style="left:350px;top:308px;width:72px">10.02</div>
    <div class="c g" style="left:422px;top:308px;width:72px">10.03</div>
    <div class="c g" style="left:494px;top:308px;width:56px">0.00</div>
    <div class="c g" style="left:550px;top:308px;width:56px">0.00</div>
    <div class="c g" style="left:606px;top:308px;width:56px">0.00</div>
    <div class="c g" style="left:662px;top:308px;width:56px">0.00</div>
    <div class="c g" style="left:718px;top:308px;width:64px">0.00</div>
    <div class="c g" style="left:782px;top:308px;width:40px">0.00</div>
    <div class="c g" style="left:822px;top:308px;width:56px">50.02</div>
  </div>

</div>

<div id="overlay" style="left:1858px;top:908px;width:62px;height:124px;background:#181921;overflow:hidden;border-top:1px solid #2e2f36;border-left:1px solid #2e2f36">
  <div style="left:44px;top:0;width:16px;height:124px;background:#555766"></div>
  <div style="left:60px;top:0;width:1px;height:124px;background:#2a2b33"></div>
  <div style="left:0;top:60px;width:62px;height:2px;background:#47484e"></div>
  <svg width="29" height="29" viewBox="0 0 29 29" style="left:8px;top:16px"><rect x="0" y="0" width="29" height="29" rx="8.5" fill="#333438"/><path d="M7.1 5.8 L22 12 L10.2 16.6 L7.1 16.9 Z M22 12.9 L22 22 L11 17.2 Z" fill="#1b1c22"/></svg>
  <svg width="29" height="29" viewBox="0 0 29 29" style="left:8px;top:78px"><rect x="0" y="0" width="29" height="29" rx="8.5" fill="#333438"/><path d="M7.1 5.8 L22 12 L10.2 16.6 L7.1 16.9 Z M22 12.9 L22 22 L11 17.2 Z" fill="#1b1c22"/></svg>
  <svg width="4" height="14" viewBox="0 0 4 14" style="left:50px;top:23px" fill="#c9845c"><circle cx="2" cy="2.4" r="1.55"/><circle cx="2" cy="7" r="1.55"/><circle cx="2" cy="11.6" r="1.55"/></svg>
  <svg width="4" height="14" viewBox="0 0 4 14" style="left:50px;top:85px" fill="#c9845c"><circle cx="2" cy="2.4" r="1.55"/><circle cx="2" cy="7" r="1.55"/><circle cx="2" cy="11.6" r="1.55"/></svg>
</div>

</div>
</body>
</html>
